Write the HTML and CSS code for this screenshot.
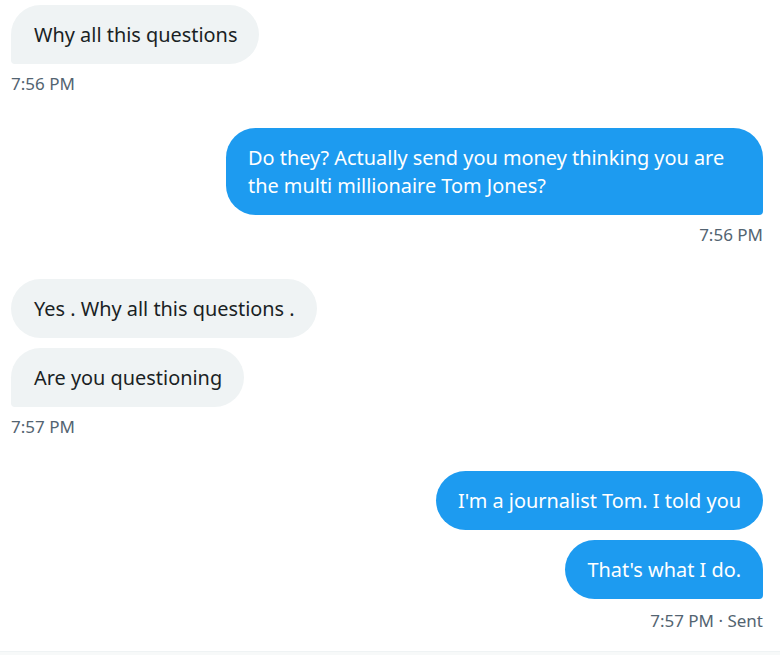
FILE: index.html
```html
<!DOCTYPE html>
<html>
<head>
<meta charset="utf-8">
<link rel="stylesheet" href="styles.css">
</head>
<body>
<div class="chat">
  <div class="group in">
    <div class="bubble last">Why all this questions</div>
    <div class="time">7:56 PM</div>
  </div>
  <div class="group out">
    <div class="bubble last wide">Do they? Actually send you money thinking you are the multi millionaire Tom Jones?</div>
    <div class="time">7:56 PM</div>
  </div>
  <div class="group in">
    <div class="bubble">Yes . Why all this questions .</div>
    <div class="bubble last">Are you questioning</div>
    <div class="time">7:57 PM</div>
  </div>
  <div class="group out">
    <div class="bubble">I'm a journalist Tom. I told you</div>
    <div class="bubble last">That's what I do.</div>
    <div class="time last-time">7:57 PM · Sent</div>
  </div>
</div>
<div class="composer"></div>
</body>
</html>
```

FILE: styles.css
```css
html, body {
  margin: 0;
  padding: 0;
  background: #ffffff;
}
body {
  width: 780px;
  height: 655px;
  overflow: hidden;
  font-family: "Noto Sans", "Open Sans", sans-serif;
  color: #0f1419;
}
.chat {
  padding: 5px 17px 0 11px;
  display: flex;
  flex-direction: column;
  gap: 34px;
}
.group {
  display: flex;
  flex-direction: column;
  gap: 10px;
}
.group.in { align-items: flex-start; }
.group.out { align-items: flex-end; }
.bubble {
  font-size: 19.9px;
  line-height: 28px;
  padding: 15.5px 22px 15.5px 23px;
  border-radius: 29.5px;
  max-width: 537px;
  box-sizing: border-box;
}
.in .bubble {
  background: #eff3f4;
  color: #1a1f24;
}
.out .bubble {
  background: #1d9bf0;
  color: #ffffff;
  padding-left: 22px;
  padding-right: 22px;
}
.in .bubble.last { border-bottom-left-radius: 4px; }
.out .bubble.last { border-bottom-right-radius: 4px; }
.time {
  font-size: 17px;
  line-height: 20px;
  color: #536471;
}
.time.last-time { margin-top: 2px; }
.composer {
  margin-top: 20px;
  height: 12px;
  background: #f7f9f9;
  border-top: 1px solid #eff3f4;
}
```
